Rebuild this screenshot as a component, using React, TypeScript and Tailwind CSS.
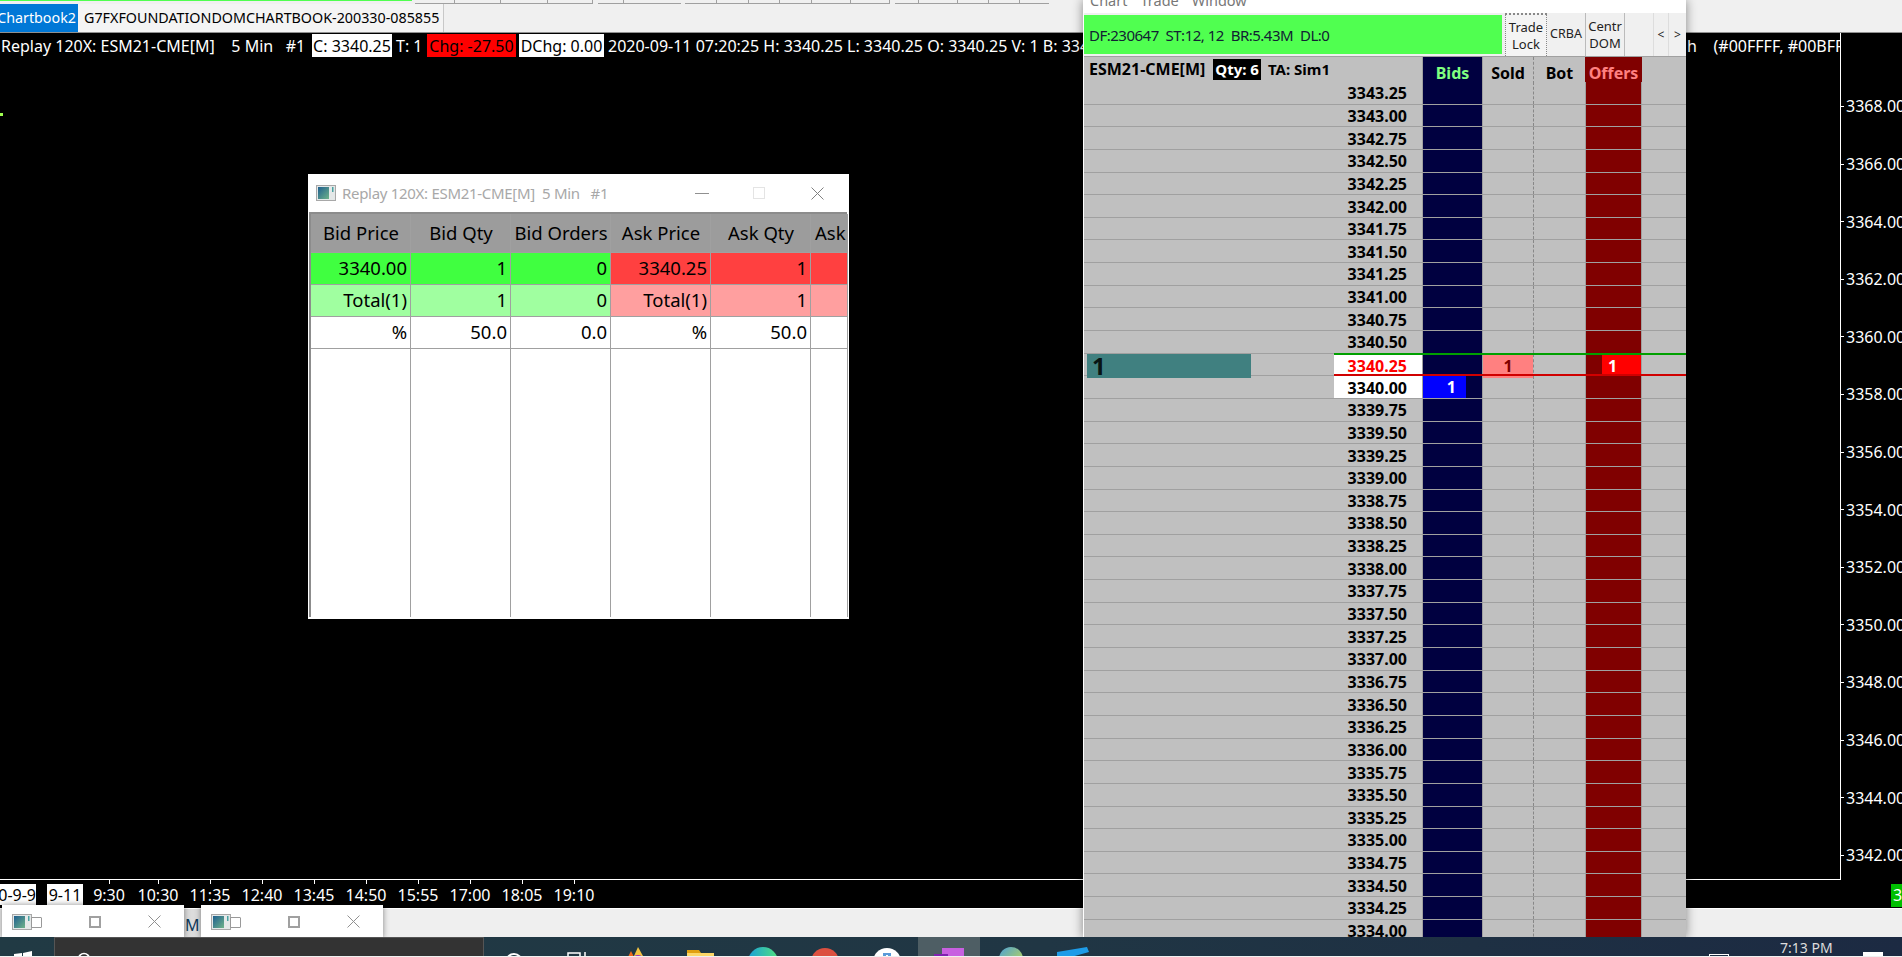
import React from "react";

const prices = Array.from({ length: 38 }, (_, i) => (3343.25 - i * 0.25).toFixed(2));
const axis = [3368, 3366, 3364, 3362, 3360, 3358, 3356, 3354, 3352, 3350, 3348, 3346, 3344, 3342];
const times = ["9:30", "10:30", "11:35", "12:40", "13:45", "14:50", "15:55", "17:00", "18:05", "19:10"];

function AppIcon() {
  return (
    <svg width="20" height="16" viewBox="0 0 20 16" className="shrink-0">
      <defs>
        <linearGradient id="appg" x1="0" y1="0" x2="1" y2="1">
          <stop offset="0" stopColor="#1f5f8f" />
          <stop offset="1" stopColor="#6fb38a" />
        </linearGradient>
      </defs>
      <rect x="0.5" y="0.5" width="19" height="15" fill="#e4e8e8" stroke="#a8a8a8" />
      <rect x="2" y="2" width="11" height="12" fill="url(#appg)" />
      <rect x="16" y="2" width="1.5" height="5" fill="#4aa3a3" />
    </svg>
  );
}

function MiniWindow({ className }: { className: string }) {
  return (
    <div className={"absolute top-[905px] h-[33px] w-[182px] bg-white shadow-[0_0_6px_rgba(0,0,0,0.45)] flex items-center " + className}>
      <div className="ml-[10px] flex items-center">
        <AppIcon />
        <div className="ml-[-1px] mt-[2px] h-[11px] w-[11px] border border-[#999] rounded-[1px]" />
      </div>
      <div className="ml-[47px] h-[12px] w-[12px] border-2 border-[#a0a0a0]" />
      <svg width="13" height="13" viewBox="0 0 13 13" className="ml-[47px]">
        <path d="M0.5 0.5L12.5 12.5M12.5 0.5L0.5 12.5" stroke="#909090" strokeWidth="1" />
      </svg>
    </div>
  );
}

function TableWindow() {
  const cell = "border-r border-b border-[#a0a0a0] pl-[4px] pr-[3px] flex items-center overflow-hidden whitespace-nowrap";
  const rows: { c: string[]; bg: string[] }[] = [
    {
      c: ["3340.00", "1", "0", "3340.25", "1", ""],
      bg: ["bg-[#40ff40]", "bg-[#40ff40]", "bg-[#40ff40]", "bg-[#ff4040]", "bg-[#ff4040]", "bg-[#ff4040]"],
    },
    {
      c: ["Total(1)", "1", "0", "Total(1)", "1", ""],
      bg: ["bg-[#a0ffa0]", "bg-[#a0ffa0]", "bg-[#a0ffa0]", "bg-[#ff9f9f]", "bg-[#ff9f9f]", "bg-[#ff9f9f]"],
    },
    {
      c: ["%", "50.0", "0.0", "%", "50.0", ""],
      bg: ["bg-white", "bg-white", "bg-white", "bg-white", "bg-white", "bg-white"],
    },
  ];
  const heads = ["Bid Price", "Bid Qty", "Bid Orders", "Ask Price", "Ask Qty", "Ask"];
  const colGrid = "grid grid-cols-[100px_100px_100px_100px_100px_37px]";
  return (
    <div className="absolute left-[308px] top-[174px] h-[445px] w-[541px] bg-white flex flex-col">
      <div className="h-[38px] flex items-center pl-[8px] shrink-0">
        <AppIcon />
        <span className="ml-[6px] text-[15px] tracking-[-0.3px] text-[#a8a8a8] whitespace-pre">Replay 120X: ESM21-CME[M]  5 Min   #1</span>
        <div className="ml-[87px] h-px w-[14px] bg-[#909090]" />
        <div className="ml-[44px] h-[12px] w-[12px] border border-[#e4e4e4]" />
        <svg width="13" height="13" viewBox="0 0 13 13" className="ml-[46px]">
          <path d="M0.5 0.5L12.5 12.5M12.5 0.5L0.5 12.5" stroke="#808080" strokeWidth="1" />
        </svg>
      </div>
      <div className="flex-1 ml-px mr-[2px] mb-[2px] border-l-2 border-t-2 border-[#8c8c8c] flex flex-col text-[18.5px] leading-none text-black min-h-0">
        <div className={colGrid + " h-[39px] shrink-0"}>
          {heads.map((h, i) => (
            <div key={i} className={cell + " bg-[#9c9c9c] " + (i === 5 ? "justify-start pl-[2px]" : "justify-center")}>
              {h}
            </div>
          ))}
        </div>
        {rows.map((r, ri) => (
          <div key={ri} className={colGrid + " h-[32px] shrink-0"}>
            {r.c.map((t, i) => (
              <div key={i} className={cell + " justify-end " + r.bg[i]}>
                {t}
              </div>
            ))}
          </div>
        ))}
        <div className={colGrid + " flex-1"}>
          {heads.map((h, i) => (
            <div key={i} className="border-r border-[#a0a0a0]" />
          ))}
        </div>
      </div>
    </div>
  );
}

function DomHeaderCell({ label, color, className }: { label: string; color: string; className: string }) {
  return (
    <div className={"flex justify-center items-end border-b border-[#a0a0a0] " + className}>
      <span className={"mb-[-1px] h-[21px] px-[3px] text-[16px] font-bold leading-[21px] " + color + " " + (label === "Bids" ? "bg-[#000040]" : label === "Offers" ? "bg-[#800000]" : "bg-[#c0c0c0]")}>
        {label}
      </span>
    </div>
  );
}

function DomRow({ price }: { price: string }) {
  const isAsk = price === "3340.25";
  const isBid = price === "3340.00";
  return (
    <div className="relative h-[22.65px] grid grid-cols-[250px_88px_61px_51px_51px_57px_1fr] border-b border-[#a0a0a0] text-[16px] font-bold leading-none">
      <div className="relative">
        {isAsk && (
          <div className="ml-[3px] h-full w-[164px] bg-[#408080] text-[24px] leading-[24px] pl-[5px] text-[#081414]">1</div>
        )}
      </div>
      <div className={"flex items-center justify-end pr-[15px] pt-px " + (isAsk ? "bg-white text-[#ff0000]" : isBid ? "bg-white text-black" : "text-black")}>
        {price}
      </div>
      <div className="bg-[#000040] border-x border-[#a0a0a0] flex">
        {isBid && <div className="w-[43px] bg-[#0000ff] text-white flex items-center justify-end pr-[10px]">1</div>}
      </div>
      <div className="border-r border-dashed border-[#888] flex">
        {isAsk && <div className="w-full bg-[#ff8080] text-[#800000] flex items-center justify-center">1</div>}
      </div>
      <div />
      <div className="bg-[#800000] border-x border-[#a0a0a0] flex justify-end">
        {isAsk && <div className="w-[39px] bg-[#ff0000] text-white flex items-center pl-[6px]">1</div>}
      </div>
      <div />
      {isAsk && <div className="absolute z-10 left-[250px] right-0 top-[-1px] h-[2px] bg-[#00a000]" />}
      {isAsk && <div className="absolute z-10 left-[250px] right-0 bottom-[-1px] h-[2px] bg-[#d00000]" />}
    </div>
  );
}

function DomWindow() {
  return (
    <div className="absolute left-[1083px] top-0 h-[938px] w-[603px] overflow-hidden bg-white shadow-[0_0_10px_rgba(0,0,0,0.45)] pl-px flex flex-col">
      <div className="h-[13px] overflow-hidden shrink-0 bg-white">
        <div className="mt-[-10px] ml-[6px] flex gap-[13px] text-[14.5px] text-[#777]">
          <span>Chart</span>
          <span>Trade</span>
          <span>Window</span>
        </div>
      </div>
      <div className="h-[43px] shrink-0 bg-[#f0f0f0] flex">
        <div className="mt-[2px] mb-[2px] w-[418px] bg-[#50ff50] flex items-center pl-[5px] pt-px text-[15px] tracking-[-0.5px] text-[#123] whitespace-pre">
          DF:230647  ST:12, 12  BR:5.43M  DL:0
        </div>
        <div className="ml-[3px] w-[42px] border-t-2 border-x border-dotted border-[#888] text-[13px] leading-[17px] text-[#222] flex flex-col items-center justify-center bg-[#f4f4f4]">
          <span>Trade</span>
          <span>Lock</span>
        </div>
        <div className="w-[39px] border-r border-[#bbb] text-[12.5px] text-[#222] flex items-center justify-center">CRBA</div>
        <div className="w-[39px] border-r border-[#bbb] text-[13px] leading-[17px] text-[#222] flex flex-col items-center justify-center">
          <span>Centr</span>
          <span>DOM</span>
        </div>
        <div className="ml-[28px] w-[16px] border-x border-[#ddd] text-[12px] text-[#222] flex items-center justify-center">&lt;</div>
        <div className="w-[17px] text-[12px] text-[#222] flex items-center justify-center">&gt;</div>
      </div>
      <div className="h-[26px] shrink-0 grid grid-cols-[338px_61px_51px_51px_57px_1fr] bg-[#c0c0c0] border-t border-[#a0a0a0] text-black">
        <div className="flex items-center border-b border-[#a0a0a0] pl-[5px] pb-[2px] text-[16px] font-bold whitespace-nowrap">
          <span>ESM21-CME[M]</span>
          <span className="ml-[8px] h-[21px] bg-black text-white px-[2px] text-[15px] leading-[21px]">Qty: 6</span>
          <span className="ml-[7px] text-[15px]">TA: Sim1</span>
        </div>
        <DomHeaderCell label="Bids" color="text-[#80ff80]" className="bg-[#000040] border-x border-x-[#a0a0a0]" />
        <DomHeaderCell label="Sold" color="text-black" className="border-r border-dashed border-r-[#888]" />
        <DomHeaderCell label="Bot" color="text-black" className="" />
        <DomHeaderCell label="Offers" color="text-[#ff8080]" className="bg-[#800000]" />
        <div className="border-b border-[#a0a0a0]" />
      </div>
      <div className="bg-[#c0c0c0] text-black">
        {prices.map((p) => (
          <DomRow key={p} price={p} />
        ))}
      </div>
    </div>
  );
}

function Taskbar() {
  const slot = "relative w-[62px] h-[19px] shrink-0 flex justify-center overflow-hidden";
  return (
    <div className="relative z-10 h-[19px] shrink-0 overflow-hidden flex bg-[linear-gradient(90deg,#213a44_0%,#203644_55%,#1c2a42_100%)]">
      <div className="w-[54px] shrink-0 pl-[14px] pt-[14px]">
        <svg width="18" height="18" viewBox="0 0 18 18"><path d="M0 3L8 2V8H0ZM9 2L18 0V8H9ZM0 9H8V15L0 14ZM9 9H18V17L9 16Z" fill="#fff" /></svg>
      </div>
      <div className="w-[430px] shrink-0 bg-[#333] border-x border-t border-[#555] pl-[21px] pt-[14px] flex gap-[60px] items-start">
        <svg width="16" height="16" viewBox="0 0 16 16"><circle cx="8" cy="7" r="5.5" fill="none" stroke="#fff" strokeWidth="1.6" /></svg>
        <div className="mt-[4px] h-px w-[3px] bg-[#ccc]" />
        <div className="ml-[24px] mt-[4px] h-px w-[3px] bg-[#ccc]" />
      </div>
      <div className={slot}>
        <svg width="22" height="22" viewBox="0 0 22 22" className="mt-[14px]"><circle cx="10" cy="11" r="8" fill="none" stroke="#fff" strokeWidth="2" /></svg>
      </div>
      <div className={slot}>
        <svg width="20" height="10" viewBox="0 0 20 10" className="mt-[15px]"><path d="M1 10V1H13V10M18 0V10" fill="none" stroke="#fff" strokeWidth="1.5" /></svg>
      </div>
      <div className={slot}>
        <svg width="26" height="24" viewBox="0 0 26 24" className="mt-[10px]"><path d="M12 0L22 18H4Z" fill="#f5c542" /><path d="M0 14L5 4L8 10Z" fill="#f06a1d" /><circle cx="12" cy="15" r="7" fill="#9a2fc0" /></svg>
      </div>
      <div className={slot}>
        <svg width="28" height="22" viewBox="0 0 28 22" className="mt-[13px]"><path d="M0 0H12L14 3H0Z" fill="#e0a010" /><path d="M0 3H27V22H0Z" fill="#fcd768" /></svg>
      </div>
      <div className={slot}>
        <svg width="30" height="30" viewBox="0 0 30 30" className="mt-[10px]">
          <defs><linearGradient id="edge" x1="0" y1="0" x2="1" y2="0"><stop offset="0" stopColor="#1aa0d8" /><stop offset="1" stopColor="#50e080" /></linearGradient></defs>
          <circle cx="15" cy="15" r="15" fill="url(#edge)" /><ellipse cx="12" cy="17" rx="8" ry="6" fill="#1468b0" />
        </svg>
      </div>
      <div className={slot}>
        <svg width="28" height="28" viewBox="0 0 28 28" className="mt-[11px]"><circle cx="14" cy="14" r="14" fill="#dc5040" /><path d="M0 16L8 28H2Z" fill="#35a853" /></svg>
      </div>
      <div className={slot}>
        <svg width="28" height="28" viewBox="0 0 28 28" className="mt-[11px]"><circle cx="14" cy="14" r="14" fill="#fff" /><path d="M10 5H18V10H15V7H13V10H10Z" fill="#5a9ad8" /></svg>
      </div>
      <div className={slot + " bg-[#4e5e64]"}>
        <svg width="30" height="20" viewBox="0 0 30 20" className="mt-[11px]"><path d="M8 0H30V18H8Z" fill="#c860e0" /><path d="M0 6H14V20H0Z" fill="#8020b0" /></svg>
      </div>
      <div className={slot}>
        <svg width="24" height="24" viewBox="0 0 24 24" className="mt-[10px]">
          <defs><linearGradient id="globe" x1="0" y1="0" x2="1" y2="1"><stop offset="0" stopColor="#4aa0d8" /><stop offset="1" stopColor="#d0e040" /></linearGradient></defs>
          <circle cx="12" cy="12" r="12" fill="url(#globe)" />
        </svg>
      </div>
      <div className={slot}>
        <svg width="32" height="14" viewBox="0 0 32 14" className="mt-[10px]"><path d="M0 5L30 0L32 5L0 14Z" fill="#1e9ce8" /></svg>
      </div>
      <div className="flex-1 min-w-0 relative">
        <div className="absolute left-[605px] top-[17px] h-[4px] w-[20px] border border-white" />
        <span className="absolute left-[676px] top-[1px] text-[14px] leading-[20px] text-[#ddd] whitespace-nowrap">7:13 PM</span>
        <div className="absolute left-[759px] top-[15px] h-[8px] w-[20px] bg-white" />
      </div>
    </div>
  );
}

export default function App() {
  return (
    <div className="relative h-[957px] w-[1902px] overflow-hidden bg-[#f0f0f0] flex flex-col [font-family:'Noto_Sans',sans-serif]">
      {/* toolbar remnant */}
      <div className="h-[4px] shrink-0 flex">
        <div className="h-[1px] w-[412px] bg-[#50ff50]" />
        <div className="ml-[3px] flex h-[4px] border-b border-[#a0a0a0]">
          <div className="w-[40px] border-r border-[#a0a0a0]" />
          <div className="w-[46px] border-r border-[#a0a0a0]" />
          <div className="w-[47px] border-r border-[#a0a0a0]" />
          <div className="w-[45px] border-r border-[#a0a0a0]" />
        </div>
        <div className="ml-[5px] flex h-[4px] border-b border-[#a0a0a0]">
          <div className="w-[26px] border-r border-[#a0a0a0]" />
          <div className="w-[57px]" />
        </div>
        <div className="ml-[4px] flex h-[4px] border-b border-[#a0a0a0]">
          <div className="w-[32px] border-r border-[#a0a0a0]" />
          <div className="w-[32px] border-r border-[#a0a0a0]" />
          <div className="w-[31px] border-r border-[#a0a0a0]" />
          <div className="w-[32px] border-r border-[#a0a0a0]" />
          <div className="w-[39px] border-r border-[#a0a0a0]" />
          <div className="w-[39px] border-r border-[#a0a0a0]" />
        </div>
        <div className="ml-[5px] flex h-[4px] border-b border-[#a0a0a0]">
          <div className="w-[24px] border-r border-[#a0a0a0]" />
          <div className="w-[39px] border-r border-[#a0a0a0]" />
          <div className="w-[31px] border-r border-[#a0a0a0]" />
          <div className="w-[31px] border-r border-[#a0a0a0]" />
          <div className="w-[29px]" />
        </div>
      </div>
      {/* tabs */}
      <div className="h-[28px] shrink-0 flex text-[14.3px] text-black whitespace-nowrap">
        <div className="w-[78px] overflow-hidden bg-[#0078d7] text-white flex items-center justify-end pr-[2px]">Chartbook2</div>
        <div className="w-[366px] border-r border-[#c8c8c8] bg-[#f4f4f4] flex items-center pl-[6px]">G7FXFOUNDATIONDOMCHARTBOOK-200330-085855</div>
      </div>
      <div className="h-px shrink-0 bg-[#909090]" />
      {/* chart */}
      <div className="h-[875px] shrink-0 bg-black text-white text-[16px] leading-none flex flex-col">
        <div className="h-[847px] shrink-0 flex">
          <div className="w-[1841px] shrink-0 border-r border-b border-white flex flex-col">
            <div className="h-[23px] mt-px shrink-0 flex whitespace-pre">
              <div className="flex-1 min-w-0 flex overflow-hidden">
                <span className="ml-px w-[311px] leading-[25px]">Replay 120X: ESM21-CME[M]    5 Min   #1</span>
                <span className="w-[80px] bg-white text-black leading-[25px] text-center">C: 3340.25</span>
                <span className="ml-[4px] w-[31px] leading-[25px]">T: 1</span>
                <span className="w-[89px] bg-[#ff0000] text-black leading-[25px] text-center">Chg: -27.50</span>
                <span className="ml-[3px] w-[85px] bg-white text-black leading-[25px] text-center">DChg: 0.00</span>
                <span className="ml-[4px] leading-[25px]">2020-09-11 07:20:25 H: 3340.25 L: 3340.25 O: 3340.25 V: 1 B: 3340.00</span>
              </div>
              <span className="w-[153px] shrink-0 overflow-hidden leading-[25px]">h    (#00FFFF, #00BFFF</span>
            </div>
            <div className="mt-[56px] h-[3px] w-[3px] bg-[#a0ff50]" />
          </div>
          <div className="flex-1 pt-[44.7px]">
            {axis.map((v) => (
              <div key={v} className="h-[57.6px] flex items-center">
                <div className="h-px w-[3px] bg-white" />
                <span className="ml-[2px]">{v}.00</span>
              </div>
            ))}
          </div>
        </div>
        <div className="h-[28px] flex">
          <div className="flex h-full">
            <div className="mt-[4px] h-[21px] w-[36px] bg-white text-black flex justify-end overflow-hidden leading-[23px] whitespace-nowrap">0-9-9</div>
            <div className="ml-[11px] mt-[4px] h-[21px] w-[36px] bg-white text-black text-center leading-[23px]">9-11</div>
            {times.map((t, i) => (
              <div key={t} className={"w-[52px] flex flex-col items-center " + (i === 1 ? "ml-[-3px]" : "")}>
                <div className="h-[4px] w-px bg-white" />
                <span className="leading-[23px]">{t}</span>
              </div>
            ))}
          </div>
          <div className="ml-auto mt-[4px] h-[23px] w-[11px] bg-[#00c000] overflow-hidden pl-[2px] leading-[23px]">3340.25</div>
        </div>
      </div>
      {/* bottom strip */}
      <div className="h-[29px] shrink-0 bg-[#efefef] border-t border-white" />
      <Taskbar />
      <TableWindow />
      <DomWindow />
      <div className="absolute left-[184px] top-[909px] h-[29px] w-[18px] bg-[#dcdcdc] text-[16px] leading-[28px] pl-[1px] pt-[2px] text-[#103a5a] overflow-hidden">M</div>
      <MiniWindow className="left-[2px]" />
      <MiniWindow className="left-[201px]" />
    </div>
  );
}
